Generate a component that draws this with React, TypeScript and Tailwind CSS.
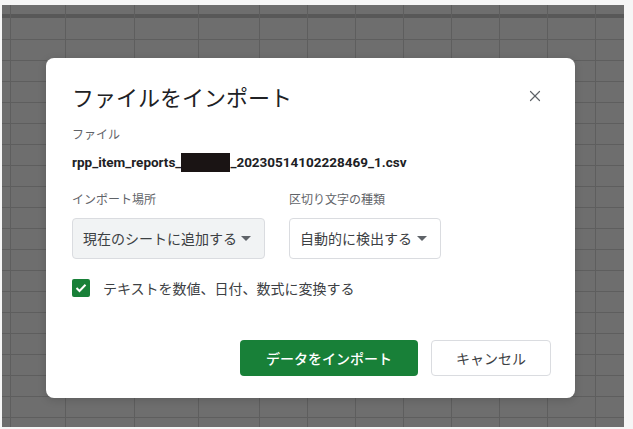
import { X } from 'lucide-react';

const colWidths = ['w-[9px]', 'w-[55px]', 'w-[69px]', 'w-[64px]', 'w-[61px]', 'w-[48px]', 'w-[48px]', 'w-[48px]', 'w-[48px]', 'w-[48px]', 'w-[48px]', 'w-[48px]'];

const jp = { fontFamily: '"Noto Sans CJK JP", "Noto Sans", sans-serif' };

const Caret = () => (
    <svg width="10" height="5" viewBox="0 0 10 5" className="shrink-0">
        <path d="M0 0 L10 0 L5 5 Z" fill="#5f6368" />
    </svg>
);

const App = () => {
    return (
        <div className="relative w-[633px] h-[429px] bg-[#f6f6f6] overflow-hidden">
            {/* sheet grid behind the modal */}
            <div className="relative ml-[2px] mt-[5px] w-[622px] h-[422px] bg-[#6e6e6e] overflow-hidden">
                <div className="flex flex-col">
                    <div className="h-[9px]" />
                    <div className="h-[4px] bg-[#585858]" />
                    <div className="h-[22px] border-b border-[#5e5e5e]" />
                    {Array.from({ length: 19 }).map((_, i) => (
                        <div key={i} className="h-[21px] border-b border-[#5e5e5e]" />
                    ))}
                </div>
                <div className="absolute inset-0 flex">
                    {colWidths.map((w, i) => (
                        <div key={i} className={`${w} shrink-0 h-full border-r border-[#5e5e5e]`} />
                    ))}
                </div>
            </div>

            {/* import dialog */}
            <div
                className="absolute left-[46px] top-[58px] w-[529px] h-[340px] rounded-lg bg-white pl-[26px] pr-[24px] pt-[24px] shadow-[0_2px_8px_rgba(0,0,0,0.15)]"
                style={jp}
            >
                <div className="flex items-center justify-between pr-[7px]">
                    <h2 className="text-[22px] leading-[28px] text-[#202124] font-normal">ファイルをインポート</h2>
                    <X size={18} strokeWidth={1.6} color="#5f6368" />
                </div>

                <div className="mt-[14px] text-[12px] leading-[20px] text-[#5f6368]">ファイル</div>
                <div
                    className="mt-[8px] flex items-center text-[13.5px] leading-[20px] font-bold text-[#202124]"
                    style={{ fontFamily: 'Roboto, "Liberation Sans", sans-serif' }}
                >
                    <span>rpp_item_reports_</span>
                    <span className="inline-block w-[49px] h-[19px] bg-[#1a1414]" />
                    <span>_20230514102228469_1.csv</span>
                </div>

                <div className="mt-[17px] flex gap-6">
                    <div className="flex flex-col">
                        <div className="text-[12px] leading-[20px] text-[#5f6368]">インポート場所</div>
                        <div className="mt-[9px] w-[193px] h-[41px] flex items-center justify-between pl-[10px] pr-[13px] rounded bg-[#f1f3f4] border border-[#dadce0] text-[14px] text-[#3c4043]">
                            <span>現在のシートに追加する</span>
                            <Caret />
                        </div>
                    </div>
                    <div className="flex flex-col">
                        <div className="text-[12px] leading-[20px] text-[#5f6368]">区切り文字の種類</div>
                        <div className="mt-[9px] w-[152px] h-[41px] flex items-center justify-between pl-[10px] pr-[13px] rounded bg-white border border-[#dadce0] text-[14px] text-[#3c4043]">
                            <span>自動的に検出する</span>
                            <Caret />
                        </div>
                    </div>
                </div>

                <div className="mt-[19px] flex items-center gap-[13px]">
                    <div className="w-[18px] h-[18px] rounded-[2px] bg-[#188038] flex items-center justify-center">
                        <svg width="12" height="10" viewBox="0 0 12 10">
                            <path d="M1.5 5 L4.5 8 L10.5 1.8" fill="none" stroke="white" strokeWidth="2" />
                        </svg>
                    </div>
                    <span className="text-[14px] leading-[20px] text-[#3c4043]">テキストを数値、日付、数式に変換する</span>
                </div>

                <div className="mt-[42px] flex justify-end gap-[13px]">
                    <button className="w-[178px] h-[36px] rounded bg-[#188038] text-white text-[14px] font-medium">
                        データをインポート
                    </button>
                    <button className="w-[120px] h-[36px] rounded bg-white border border-[#dadce0] text-[#3c4043] text-[14px]">
                        キャンセル
                    </button>
                </div>
            </div>
        </div>
    );
};

export default App;
